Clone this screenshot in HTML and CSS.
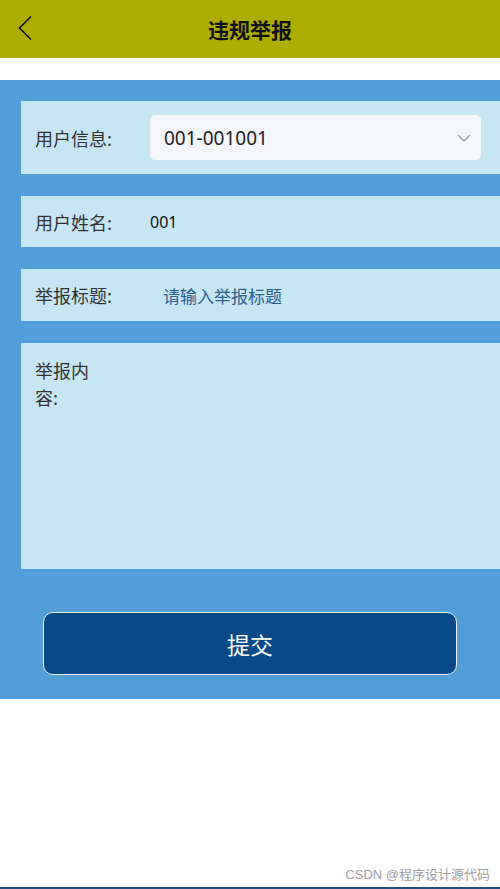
FILE: index.html
```html
<!DOCTYPE html>
<html lang="zh-CN">
<head>
<meta charset="utf-8">
<title>违规举报</title>
<link rel="stylesheet" href="styles.css">
</head>
<body>
<header class="topbar">
  <span class="back">
    <svg width="16" height="26" viewBox="0 0 16 26"><path d="M14 1.5 L2.5 13 L14 24.5" fill="none" stroke="#111" stroke-width="1.6"/></svg>
  </span>
  <h1 class="title">违规举报</h1>
</header>
<div class="spacer"></div>
<main class="form">
  <div class="row row-select">
    <span class="label">用户信息:</span>
    <div class="select">
      <span class="select-text">001-001001</span>
      <svg class="chev" width="14" height="8" viewBox="0 0 14 8"><path d="M1 1 L7 7 L13 1" fill="none" stroke="#9a9ea6" stroke-width="1.3"/></svg>
    </div>
  </div>
  <div class="row row-plain row-name">
    <span class="label">用户姓名:</span>
    <span class="value">001</span>
  </div>
  <div class="row row-plain">
    <span class="label">举报标题:</span>
    <span class="placeholder">请输入举报标题</span>
  </div>
  <div class="row row-area">
    <span class="label label-narrow">举报内容:</span>
  </div>
  <div class="btn-wrap">
    <button class="submit">提交</button>
  </div>
</main>
<footer class="foot">
  <span class="mark">CSDN @程序设计源代码</span>
</footer>
</body>
</html>
```

FILE: styles.css
```css
* { box-sizing: border-box; }
html, body { margin: 0; padding: 0; }
body {
  width: 500px;
  height: 889px;
  position: relative;
  background: #fff;
  font-family: "Noto Sans", "Noto Sans CJK SC", sans-serif;
  color: #333;
  overflow: hidden;
}
.topbar {
  height: 58px;
  background: #adad00;
  display: flex;
  align-items: center;
  justify-content: center;
  position: relative;
}
.back {
  position: absolute;
  left: 17px;
  top: 15px;
  display: block;
  line-height: 0;
}
.title {
  margin: 0;
  font-family: "Noto Sans CJK SC", sans-serif;
  font-size: 21px;
  font-weight: 700;
  color: #111;
}
.spacer { height: 22px; }
.form {
  background: #539dd9;
  padding: 21px 0 24px 21px;
  display: flex;
  flex-direction: column;
  gap: 22px;
}
.row {
  background: #c6e6f3;
  display: flex;
  align-items: center;
  padding-left: 14px;
}
.row-select { height: 73px; }
.row-plain { height: 52px; }
.row-name { height: 51px; }
.row-area {
  height: 226px;
  align-items: flex-start;
  padding-top: 14px;
}
.label {
  width: 115px;
  flex: none;
  font-family: "Noto Sans CJK SC", sans-serif;
  font-size: 18px;
  color: #333;
}
.label-narrow {
  width: 60px;
  line-height: 27px;
}
.select {
  width: 331px;
  height: 45px;
  background: #f5f6f9;
  border-radius: 5px;
  display: flex;
  align-items: center;
  justify-content: space-between;
  padding: 0 10px 0 14px;
}
.select-text {
  font-size: 19px;
  color: #222;
}
.value {
  font-size: 16px;
  color: #111;
}
.placeholder {
  margin-left: 13px;
  font-family: "Noto Sans CJK SC", sans-serif;
  font-size: 17px;
  color: #2d5f8f;
}
.btn-wrap {
  padding: 21px 43px 0 22px;
}
.submit {
  display: block;
  width: 100%;
  height: 63px;
  background: #084a88;
  border: 1.5px solid #e6eef6;
  border-radius: 10px;
  color: #fff;
  font-family: "Noto Sans CJK SC", sans-serif;
  font-size: 23px;
}
.foot {
  position: absolute;
  left: 0;
  right: 0;
  bottom: 0;
  height: 30px;
  border-bottom: 2px solid #1f4e7c;
  display: flex;
  justify-content: flex-end;
  align-items: center;
  padding-right: 10px;
}
.mark {
  font-family: "Liberation Sans", "Noto Sans CJK SC", sans-serif;
  font-size: 13px;
  color: #a0a0a0;
}
```
